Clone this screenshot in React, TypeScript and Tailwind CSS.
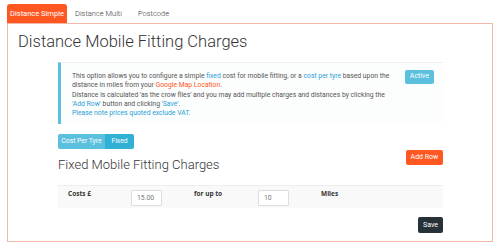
import React from "react";

const font = { fontFamily: "Roboto, 'Noto Sans', sans-serif" };

export default function App() {
  return (
    <div className="w-[500px] h-[248px] bg-white pt-[4px] pl-[7px] pr-[7px]" style={font}>
      {/* Tabs */}
      <div className="flex items-end h-[19px] text-[7.5px] font-light">
        <div className="h-[19px] w-[60px] flex items-center justify-center bg-[#ff5722] text-white rounded-t-[3px] font-normal">
          Distance Simple
        </div>
        <div className="h-[19px] px-[8px] flex items-center text-[#333]">Distance Multi</div>
        <div className="h-[19px] px-[8px] flex items-center text-[#333]">Postcode</div>
      </div>

      {/* Panel */}
      <div className="border border-[#f3b8a8] h-[219px] w-[486px] px-[10px] pt-[8px]">
        <h1 className="text-[16.5px] leading-[20px] text-[#333] font-light">Distance Mobile Fitting Charges</h1>

        <div className="ml-[40px] mr-[39px] mt-[10px]">
          {/* Info box */}
          <div className="relative border-l-[3px] border-[#5bc0de] border-t border-t-[#eee] bg-[#fcfdfd] h-[62px] pl-[11px] pt-[9px] text-[6.8px] leading-[9.3px] text-[#555]">
            <p>
              This option allows you to configure a simple <span className="text-[#2a9fd6]">fixed</span> cost for mobile fitting, or a{" "}
              <span className="text-[#2a9fd6]">cost per tyre</span> based upon the
              <br />
              distance in miles from your <span className="text-[#ff5722]">Google Map Location</span>.
              <br />
              Distance is calculated 'as the crow flies' and you may add multiple charges and distances by clicking the
              <br />
              <span className="text-[#2a9fd6]">'Add Row'</span> button and clicking <span className="text-[#2a9fd6]">'Save'</span>.
              <br />
              <span className="text-[#2a9fd6]">Please note prices quoted exclude VAT.</span>
            </p>
            <div className="absolute right-[9px] top-[7px] h-[14px] w-[29px] rounded-[2px] bg-[#5bc0de] text-white text-[7px] flex items-center justify-center">
              Active
            </div>
          </div>

          {/* Toggle */}
          <div className="flex mt-[10px] h-[15px] text-[6.8px] text-white">
            <div className="w-[47px] flex items-center justify-center bg-[#5bc0de] rounded-l-[2px]">Cost Per Tyre</div>
            <div className="w-[29px] flex items-center justify-center bg-[#31b0d5] rounded-r-[2px]">Fixed</div>
          </div>

          {/* Heading + Add row */}
          <div className="flex justify-between items-start">
            <h2 className="mt-[8px] text-[13px] leading-[16px] text-[#333] font-light">Fixed Mobile Fitting Charges</h2>
            <div className="mt-[1px] h-[15px] w-[37px] rounded-[2px] bg-[#ff5722] text-white text-[7px] flex items-center justify-center">
              Add Row
            </div>
          </div>

          {/* Table */}
          <div className="mt-[12px] border-t border-[#eee] bg-[#f9f9f9] h-[23px] text-[6.5px] font-bold text-[#333] relative" style={{ fontFamily: "'Open Sans', sans-serif" }}>
            <span className="absolute left-[10px] top-[3px]">Costs £</span>
            <div className="absolute left-[73px] top-[4px] w-[31px] h-[16px] bg-white border border-[#ddd] rounded-[1px] text-[6.8px] font-normal text-[#777] flex items-center pl-[5px]" style={font}>
              15.00
            </div>
            <span className="absolute left-[136px] top-[3px]">for up to</span>
            <div className="absolute left-[200px] top-[4px] w-[31px] h-[16px] bg-white border border-[#ddd] rounded-[1px] text-[6.8px] font-normal text-[#777] flex items-center pl-[5px]" style={font}>
              10
            </div>
            <span className="absolute left-[263px] top-[3px]">Miles</span>
          </div>

          <div className="flex justify-end mt-[9px]">
            <div className="h-[16px] w-[25px] rounded-[2px] bg-[#263238] text-white text-[7px] flex items-center justify-center">Save</div>
          </div>
        </div>
      </div>
    </div>
  );
}
